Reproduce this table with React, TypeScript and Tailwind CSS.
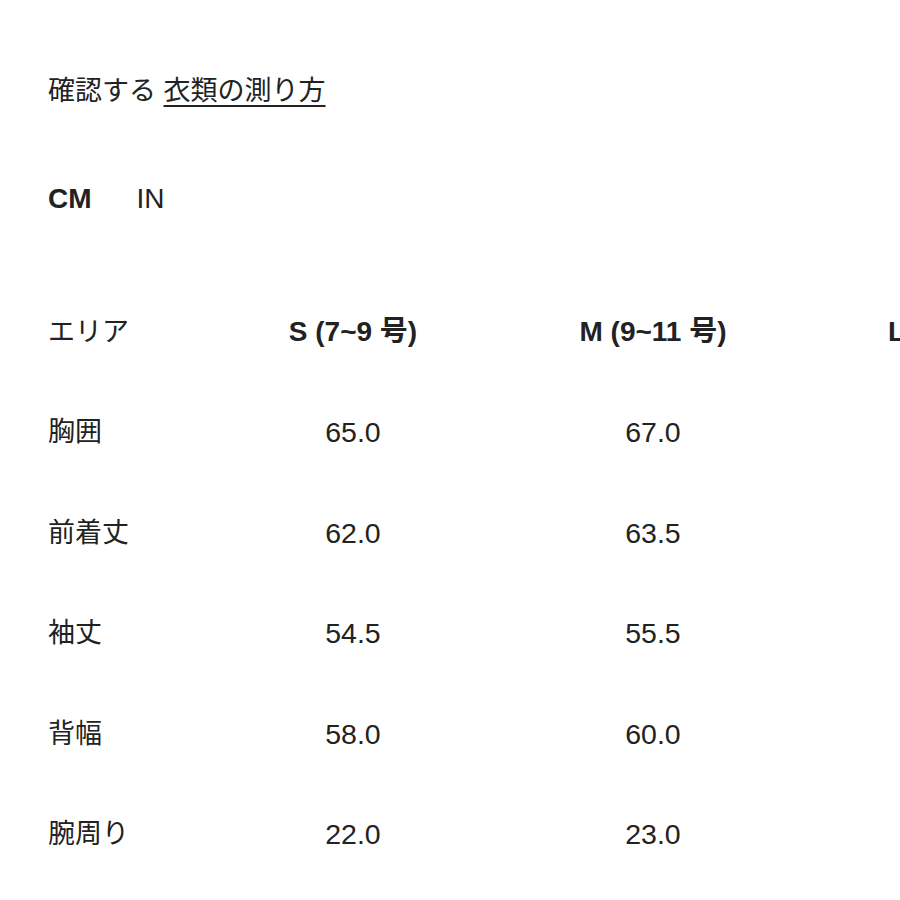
const rows = [
  { area: "胸囲", s: "65.0", m: "67.0" },
  { area: "前着丈", s: "62.0", m: "63.5" },
  { area: "袖丈", s: "54.5", m: "55.5" },
  { area: "背幅", s: "58.0", m: "60.0" },
  { area: "腕周り", s: "22.0", m: "23.0" },
];

const font = "font-['Liberation_Sans','Noto_Sans_CJK_JP',sans-serif]";

export default function App() {
  return (
    <div className={`w-[900px] h-[900px] overflow-hidden bg-white text-[#222] ${font}`}>
      <div className="pl-[48px] pt-[72px]">
        {/* 見出し */}
        <p className="text-[27px] leading-[38px]">
          確認する{" "}
          <a className="underline underline-offset-[5px] decoration-[1.5px]">衣類の測り方</a>
        </p>

        {/* 単位切替 */}
        <div className="mt-[70px] flex gap-[45px] text-[28px] leading-[38px]">
          <span className="font-bold">CM</span>
          <span>IN</span>
        </div>

        {/* サイズ表 */}
        <div className="mt-[95px] w-[1100px]">
          <div className="grid grid-cols-[155px_300px_300px_300px] h-[100px] items-start">
            <span className="text-[27px] leading-[38px]">エリア</span>
            <span className="text-[28px] leading-[38px] font-bold text-center">S (7~9 号)</span>
            <span className="text-[28px] leading-[38px] font-bold text-center">M (9~11 号)</span>
            <span className="text-[28px] leading-[38px] font-bold pl-[85px]">L (11~13 号)</span>
          </div>
          {rows.map((r) => (
            <div key={r.area} className="grid grid-cols-[155px_300px_300px_300px] h-[100.5px] items-start">
              <span className="text-[27px] leading-[38px]">{r.area}</span>
              <span className="text-[28.5px] leading-[38px] text-center">{r.s}</span>
              <span className="text-[28.5px] leading-[38px] text-center">{r.m}</span>
              <span className="text-[28.5px] leading-[38px] text-center"></span>
            </div>
          ))}
        </div>
      </div>
    </div>
  );
}
